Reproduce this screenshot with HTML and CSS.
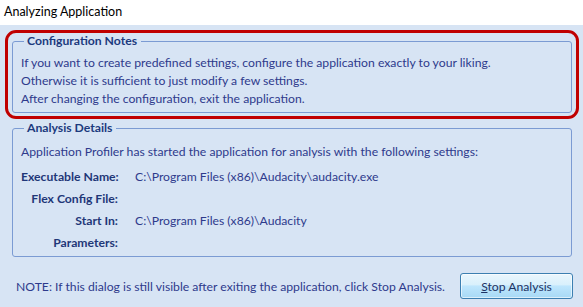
FILE: index.html
```html
<!DOCTYPE html>
<html>
<head>
<meta charset="utf-8">
<link rel="stylesheet" href="styles.css">
</head>
<body>
<div class="window">
  <div class="title">Analyzing Application</div>
  <div class="content">
    <div class="highlight">
      <fieldset class="group notes">
        <legend>Configuration Notes</legend>
        <div class="line">If you want to create predefined settings, configure the application exactly to your liking.</div>
        <div class="line">Otherwise it is sufficient to just modify a few settings.</div>
        <div class="line">After changing the configuration, exit the application.</div>
      </fieldset>
    </div>
    <fieldset class="group details">
      <legend>Analysis Details</legend>
      <div class="line">Application Profiler has started the application for analysis with the following settings:</div>
      <div class="grid">
        <div class="label">Executable Name:</div><div class="value">C:\Program Files (x86)\Audacity\audacity.exe</div>
        <div class="label">Flex Config File:</div><div class="value"></div>
        <div class="label">Start In:</div><div class="value">C:\Program Files (x86)\Audacity</div>
        <div class="label">Parameters:</div><div class="value"></div>
      </div>
    </fieldset>
    <div class="footer">
      <div class="note">NOTE: If this dialog is still visible after exiting the application, click Stop Analysis.</div>
      <button class="btn"><u>S</u>top Analysis</button>
    </div>
  </div>
</div>
</body>
</html>
```

FILE: styles.css
```css
html, body {
  margin: 0;
  padding: 0;
}
body {
  width: 583px;
  height: 307px;
  overflow: hidden;
  font-family: "Lato", "Open Sans", sans-serif;
  font-size: 12.2px;
  color: #2e3a8c;
}
.window {
  display: flex;
  flex-direction: column;
  height: 307px;
}
.title {
  height: 25px;
  line-height: 24px;
  padding-left: 4px;
  background: #ffffff;
  color: #000000;
  font-size: 12.5px;
}
.content {
  flex: 1;
  background: #d7e4f4;
  display: flex;
  flex-direction: column;
}
.highlight {
  margin: 5px 4px 0 5px;
  border: 3px solid #c00000;
  border-radius: 11px;
  padding: 0 4px 3px 4px;
}
.group {
  margin: 0;
  border: 1px solid #7b9bd3;
  border-radius: 3px;
  padding: 5px 8px 4px 8px;
  min-width: 0;
}
.group legend {
  padding: 0 4px 0 3px;
  margin-left: 3px;
  font-weight: bold;
  color: #1c3a7e;
  line-height: 16px;
}
.line {
  line-height: 18px;
  white-space: nowrap;
}
.details {
  margin: 1px 11px 0 12px;
  padding: 7px 8px 3px 8px;
}
.grid {
  display: grid;
  grid-template-columns: 97px 1fr;
  column-gap: 17px;
  margin-top: 4px;
  grid-auto-rows: 22px;
  align-items: center;
}
.label {
  text-align: right;
  font-weight: bold;
  color: #1f3778;
  white-space: nowrap;
}
.value {
  white-space: nowrap;
}
.footer {
  display: flex;
  align-items: center;
  justify-content: space-between;
  margin-top: 16px;
  padding: 0 10px 0 16px;
}
.btn {
  width: 113px;
  height: 26px;
  border: 1px solid #3c7fb1;
  border-radius: 3px;
  background: linear-gradient(#eaf6fd 0%, #d9f0fc 45%, #bee6fd 50%, #a7d9f5 100%);
  font-family: inherit;
  font-size: 12.2px;
  color: #1e3262;
  padding: 0;
  box-shadow: inset 0 0 0 1px rgba(255,255,255,0.6);
}
```
